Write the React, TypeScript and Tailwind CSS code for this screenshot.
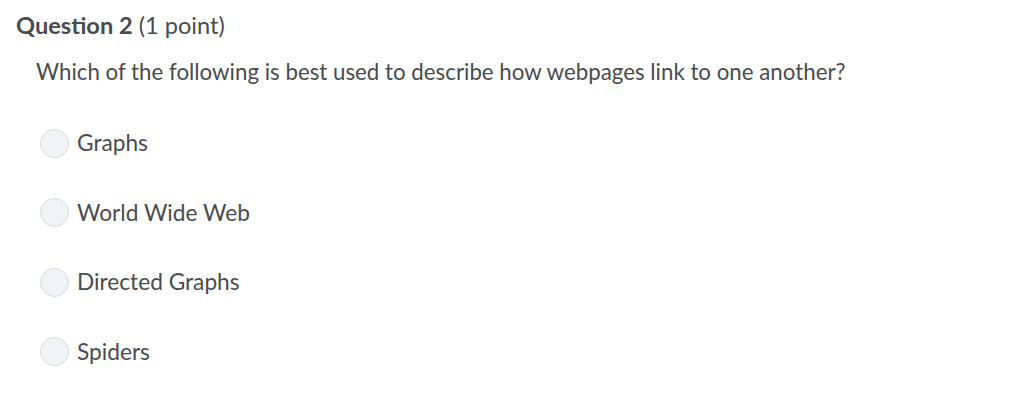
export default function App() {
  const options = ["Graphs", "World Wide Web", "Directed Graphs", "Spiders"];
  return (
    <div className="w-[1024px] h-[405px] bg-white text-[#494c4e] font-['Lato',sans-serif] overflow-hidden">
      <div className="pl-4 pt-[10px]">
        <h2 className="text-[23.6px] leading-[30px]">
          <span className="font-bold">Question 2</span> (1 point)
        </h2>
      </div>
      <div className="pl-9 pt-[17px]">
        <p className="text-[22.3px] leading-[30px]">
          Which of the following is best used to describe how webpages link to one another?
        </p>
        <div className="flex flex-col gap-[39.5px] pt-[41px] pl-1">
          {options.map((opt) => (
            <label key={opt} className="flex items-center gap-[8px] h-[30px]">
              <span className="w-[29px] h-[29px] rounded-full bg-[#f2f3f5] border border-[#d3d9e3] shrink-0" />
              <span className="text-[22.7px] leading-[30px]">{opt}</span>
            </label>
          ))}
        </div>
      </div>
    </div>
  );
}
